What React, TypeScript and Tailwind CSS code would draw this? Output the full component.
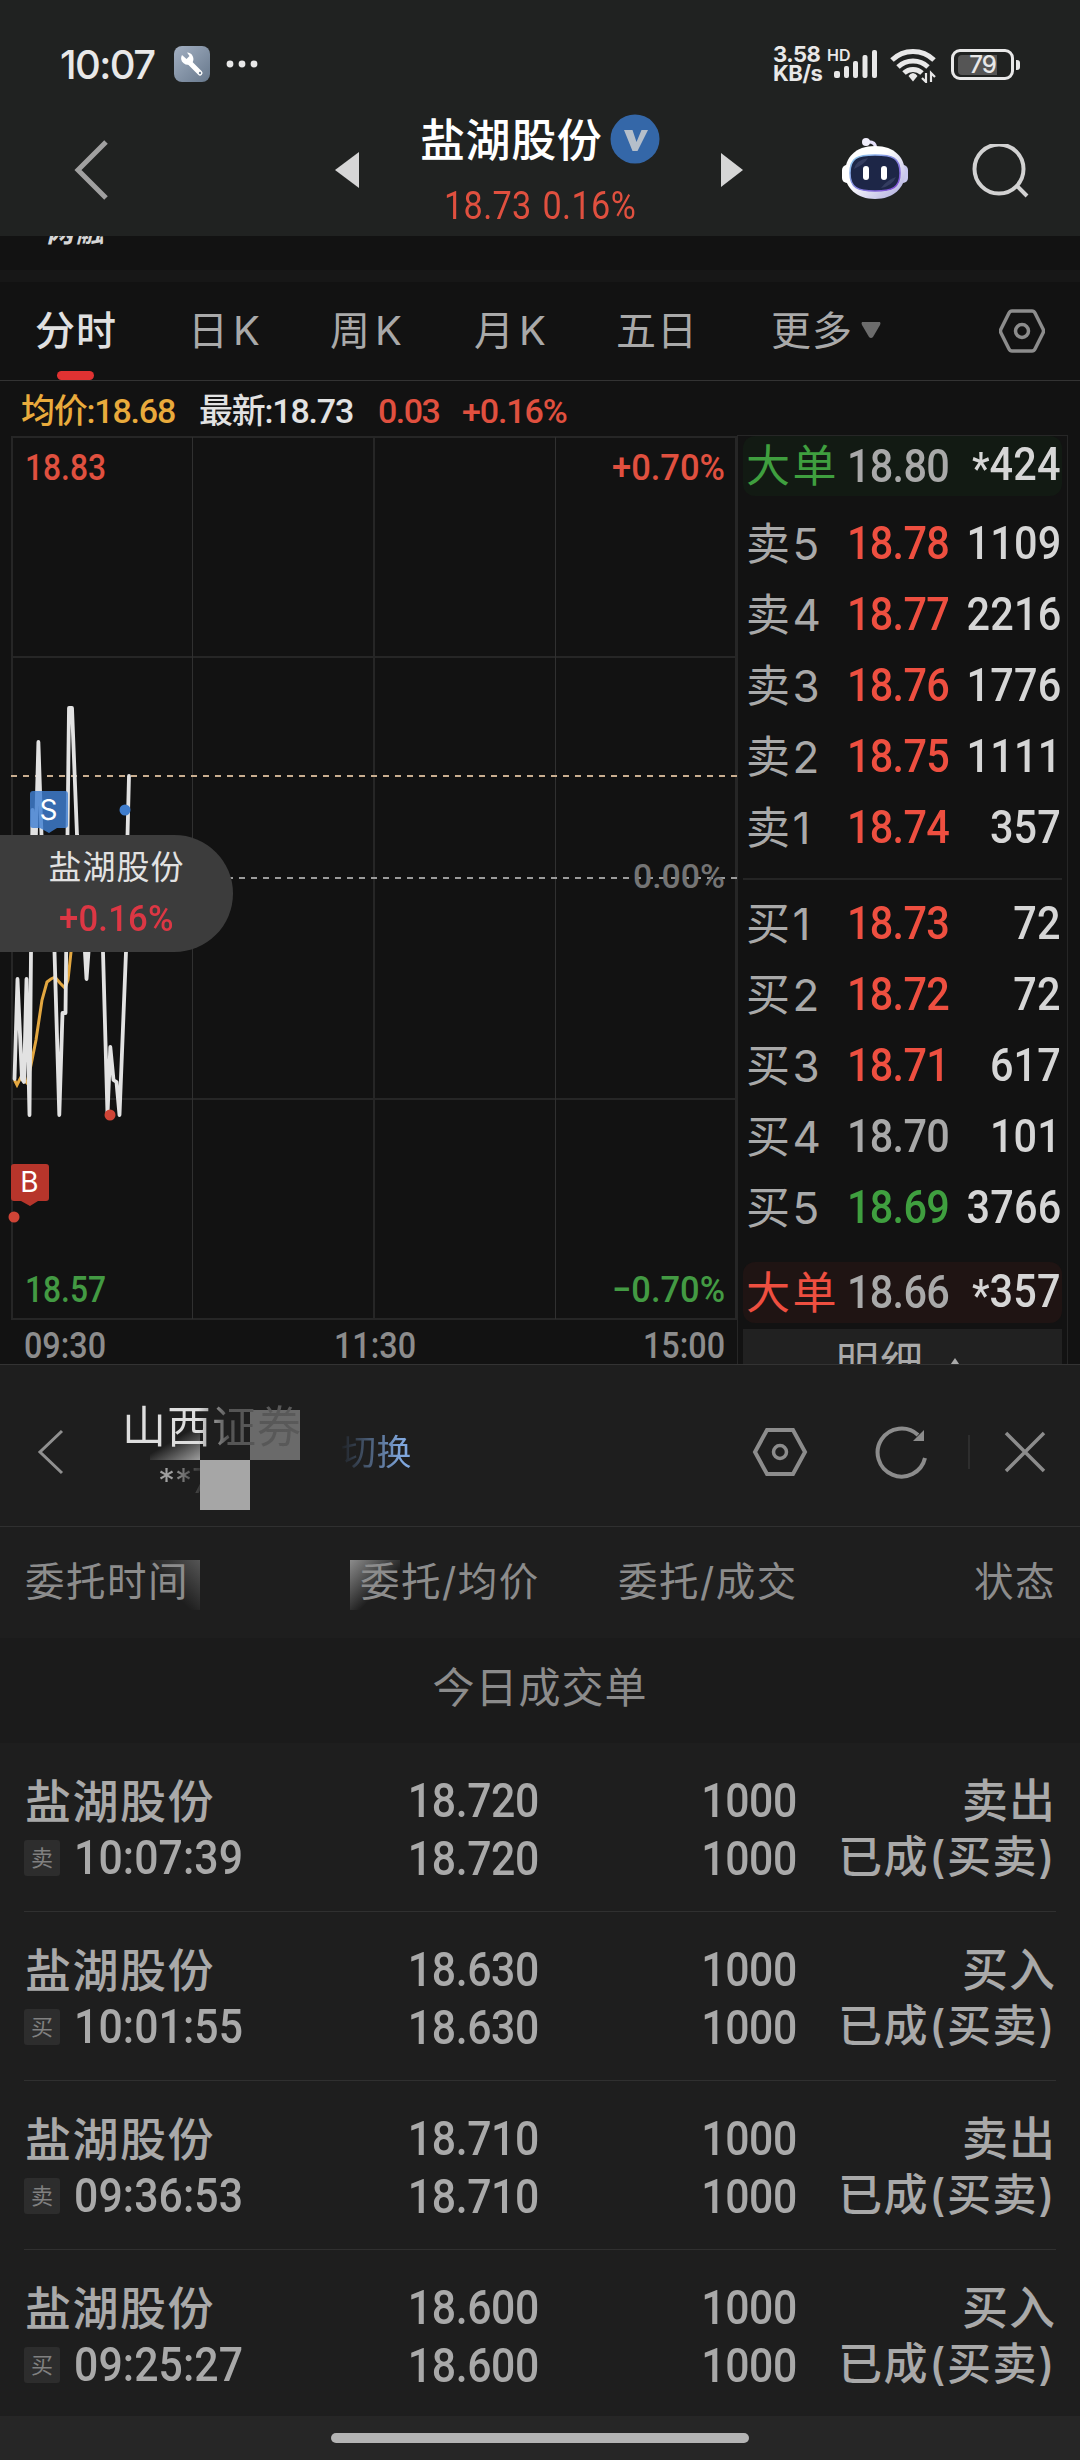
import React from 'react';
import clsx from 'clsx';

interface Quote {
  label: string;
  price: string;
  amount: string;
  big?: boolean;
  tone: string;
}

interface Order {
  side: string;
  action: string;
  time: string;
  price: string;
}

const RED = 'text-[#ee4f40]';
const GREEN = 'text-[#3f9f3f]';
const GRAY = 'text-[#a9a9a9]';

const sells: Quote[] = [
  { label: '卖5', price: '18.78', amount: '1109', tone: RED },
  { label: '卖4', price: '18.77', amount: '2216', tone: RED },
  { label: '卖3', price: '18.76', amount: '1776', tone: RED },
  { label: '卖2', price: '18.75', amount: '1111', tone: RED },
  { label: '卖1', price: '18.74', amount: '357', tone: RED },
];

const buys: Quote[] = [
  { label: '买1', price: '18.73', amount: '72', tone: RED },
  { label: '买2', price: '18.72', amount: '72', tone: RED },
  { label: '买3', price: '18.71', amount: '617', tone: RED },
  { label: '买4', price: '18.70', amount: '101', tone: GRAY },
  { label: '买5', price: '18.69', amount: '3766', tone: GREEN },
];

const orders: Order[] = [
  { side: '卖', action: '卖出', time: '10:07:39', price: '18.720' },
  { side: '买', action: '买入', time: '10:01:55', price: '18.630' },
  { side: '卖', action: '卖出', time: '09:36:53', price: '18.710' },
  { side: '买', action: '买入', time: '09:25:27', price: '18.600' },
];

const StatusBar: React.FC = () => (
  <div className="flex h-[120px] items-start pl-[60px] pr-[60px] pt-[44px] text-[#e8e8e8]">
    <span className="w-[98px] font-[Inter] text-[40px] font-medium leading-[42px] tracking-[-1.600px]">10:07</span>
    <svg width="36" height="36" viewBox="0 0 36 36" className="ml-[16px] mt-[2px]">
      <defs>
        <linearGradient id="tool" x1="0" y1="0" x2="1" y2="1">
          <stop offset="0" stopColor="#a3b0c2" />
          <stop offset="1" stopColor="#67788c" />
        </linearGradient>
      </defs>
      <rect width="36" height="36" rx="8" fill="url(#tool)" />
      <path d="M15 16L26 27" stroke="#fff" strokeWidth="5" strokeLinecap="round" />
      <path d="M8 9a6.500 6.500 0 0 0 10 8a6.500 6.500 0 0 0-5-10.500l2.500 3.500-3 3z" fill="#fff" />
      <circle cx="26" cy="27" r="1.200" fill="#6f8094" />
    </svg>
    <svg width="34" height="8" viewBox="0 0 34 8" className="ml-[16px] mt-[16px]" fill="#e8e8e8">
      <circle cx="4" cy="4" r="3.400" />
      <circle cx="16" cy="4" r="3.400" />
      <circle cx="28" cy="4" r="3.400" />
    </svg>
    <div className="ml-auto w-[56px] pt-[1px] font-[Inter] text-[22px] font-bold leading-[19px] tracking-[-0.500px]">
      <div>3.58</div>
      <div>KB/s</div>
    </div>
    <div className="w-[50px]">
      <div className="ml-[-2px] h-[5px] pt-[4px] font-[Inter] text-[16px] font-semibold leading-[14px]">HD</div>
      <svg width="46" height="30" viewBox="0 0 46 30" className="ml-[3px]" fill="#e8e8e8">
        <rect x="2" y="22" width="6" height="7" rx="2" />
        <rect x="12" y="17" width="5" height="12" rx="2" />
        <rect x="21" y="12" width="5" height="17" rx="2" />
        <rect x="30.500" y="6" width="5" height="23" rx="2" />
        <rect x="40" y="1" width="5" height="28" rx="2" />
      </svg>
    </div>
    <svg width="50" height="38" viewBox="0 0 50 38" className="ml-[10px] mt-[1px]" fill="none" stroke="#e8e8e8">
      <path d="M3 15a30 30 0 0 1 42 0" strokeWidth="5" />
      <path d="M9 22a22 22 0 0 1 30 0" strokeWidth="5" />
      <path d="M15 28a13 13 0 0 1 18 0" strokeWidth="5" />
      <path d="M24 28a6 6 0 0 1 4.500 3L24 36.500 19.500 31A6 6 0 0 1 24 28z" fill="#e8e8e8" stroke="none" />
      <path d="M37 28v9l-4-4M42 37v-9l4 4" strokeWidth="2.200" />
    </svg>
    <div className="ml-[12px] mt-[5px] flex items-center">
      <div className="flex h-[31px] w-[63px] items-center rounded-[9px] border-[3px] border-[#e8e8e8] px-[4px]">
        <div className="flex h-[20px] w-[39px] items-center justify-center rounded-l-[4px] bg-[#555] pl-[10px] font-[Inter] text-[24px] font-medium tracking-[-1px]">
          79
        </div>
      </div>
      <div className="ml-[2px] h-[10px] w-[4px] rounded-r-[3px] bg-[#e8e8e8]" />
    </div>
  </div>
);

const Robot: React.FC = () => (
  <svg width="68" height="66" viewBox="0 0 68 66">
    <defs>
      <linearGradient id="shell" x1="0" y1="0" x2="1" y2="1">
        <stop offset="0.4" stopColor="#ffffff" />
        <stop offset="1" stopColor="#a9a7dc" />
      </linearGradient>
      <linearGradient id="rim" x1="0" y1="0" x2="1" y2="1">
        <stop offset="0" stopColor="#8fd0f0" />
        <stop offset="1" stopColor="#7b3fd0" />
      </linearGradient>
    </defs>
    <path d="M26 6q8-1 9 6" fill="none" stroke="#e4e0fa" strokeWidth="3" />
    <circle cx="25" cy="6" r="4" fill="#f1effc" />
    <rect x="1" y="29" width="12" height="18" rx="5" fill="#fff" />
    <rect x="55" y="29" width="12" height="18" rx="5" fill="#c9c8ee" />
    <path d="M34 10C54 10 64 22 64 37S52 63 34 63 4 52 4 37 14 10 34 10z" fill="url(#shell)" />
    <path d="M34 19c18 0 25 3 25 18s-8 18-25 18S9 52 9 37s7-18 25-18z" fill="#1d2647" stroke="url(#rim)" strokeWidth="1.500" />
    <path d="M13 33q2-9 14-11-3 6-14 11zM40 52q11-2 15-11-9 3-15 11z" fill="#343d60" />
    <rect x="22" y="30" width="6" height="14" rx="3" fill="#fff" />
    <rect x="40" y="30" width="6" height="14" rx="3" fill="#fff" />
  </svg>
);

const TitleBar: React.FC = () => (
  <div className="flex h-[116px] items-start">
    <svg width="34" height="62" viewBox="0 0 34 62" className="ml-[74px] mt-[19px]">
      <path d="M32 3L4 31l28 28" fill="none" stroke="#a0a0a0" strokeWidth="5" />
    </svg>
    <svg width="24" height="36" viewBox="0 0 24 36" className="ml-[227px] mt-[32px]">
      <path d="M24 0v36L0 18z" fill="#d6d6d6" />
    </svg>
    <div className="ml-[61px] flex w-[240px] flex-col">
      <div className="flex h-[48px] items-start">
        <span className="w-[193px] whitespace-nowrap text-[45px] font-medium leading-[42px] tracking-[0.600px] text-white">盐湖股份</span>
        <svg width="50" height="50" viewBox="0 0 50 50" className="mt-[-6px] shrink-0">
          <circle cx="25" cy="25" r="24.500" fill="#3467a8" />
          <path d="M14 16h8.500l4 12 5-12H38L27.500 37h-5z" fill="#b5bfca" />
        </svg>
      </div>
      <div className="ml-[24px] mt-[18px] flex w-[196px] origin-left scale-x-90 gap-[12px] whitespace-nowrap font-[Roboto] text-[38px] leading-[40px] tracking-[0.400px] text-[#e0503f]">
        <span>18.73</span>
        <span>0.16%</span>
      </div>
    </div>
    <svg width="22" height="34" viewBox="0 0 22 34" className="ml-[61px] mt-[33px]">
      <path d="M0 0v34l22-17z" fill="#d6d6d6" />
    </svg>
    <div className="ml-[98px] mt-[16px]">
      <Robot />
    </div>
    <svg width="58" height="58" viewBox="0 0 58 58" className="ml-[63px] mt-[24px]" fill="none" stroke="#d2d2d2" strokeWidth="4">
      <circle cx="27" cy="25" r="24.500" />
      <path d="M44 41l11 11" />
    </svg>
  </div>
);

const Tabs: React.FC = () => (
  <div className="flex h-[99px] items-start border-b border-[#333] pt-[19px] text-[40px] leading-[60px] tracking-[1px] text-[#a9a9a9]">
    <div className="ml-[35px] flex h-[79px] w-[153px] flex-col whitespace-nowrap font-medium text-[#e0e0e0]">
      分时
      <span className="ml-[22px] mt-[10px] h-[9px] w-[37px] shrink-0 rounded-full bg-[#e03232]" />
    </div>
    <div className="flex w-[142px] gap-[4px]">
      <span>日</span>
      <span>K</span>
    </div>
    <div className="flex w-[144px] gap-[4px]">
      <span>周</span>
      <span>K</span>
    </div>
    <div className="flex w-[142px] gap-[4px]">
      <span>月</span>
      <span>K</span>
    </div>
    <div className="w-[155px]">五日</div>
    <div className="w-[90px]">更多</div>
    <svg width="20" height="17" viewBox="0 0 20 17" className="mt-[21px]">
      <path d="M1 0h18q1 1 0 3l-7 12q-2 2-4 0L1 3Q0 1 1 0z" fill="#6c6c6c" />
    </svg>
    <svg width="46" height="44" viewBox="0 0 46 44" className="ml-[118px] mt-[8px]" fill="none" stroke="#8c8c8c" strokeWidth="3.500">
      <path d="M13 2h20q2 0 3 2l8 16q1 2 0 4l-8 16q-1 2-3 2H13q-2 0-3-2L2 24q-1-2 0-4l8-16q1-2 3-2z" />
      <circle cx="23" cy="22" r="6.500" />
    </svg>
  </div>
);

const PriceChart: React.FC = () => (
  <svg width="737" height="929" viewBox="0 435 737 929" className="block shrink-0">
    <g stroke="#262626" strokeWidth="2" fill="none">
      <path d="M12 437H736V1319H12zM374 437V1319M12 657H736M12 1099H736" />
      <path d="M192.500 437V1319M555.500 437V1319" stroke="#303030" strokeWidth="1" />
    </g>
    <path d="M11 776H737" stroke="#c9ae90" strokeWidth="2" strokeDasharray="6 6" />
    <path d="M11 878H737" stroke="#9b9b9b" strokeWidth="2" strokeDasharray="6 6" />
    <path
      d="M14.500 1080L17 1085 21 1077 27 1083 31 1065 36 1040 42 1000 47 982 51 979 55 977 60 983 65 988 68 980 71 952 75 900"
      fill="none"
      stroke="#e3a740"
      strokeWidth="3"
    />
    <path
      d="M14.500 1079L17.500 979 22 1079 24 1082 26.500 979 29.500 1115 31 952 32.500 810 35.500 850 38.400 742 42 850 54.500 952 59.300 1115 62.500 1013 65.500 1013 67.500 835 69 708 72 708 77 835 82 900 86.500 979 93 890 103 952 107.500 1115 110.300 1047 113.500 1080 116.500 1082 119.500 1115 126 952 127.500 835 129 776"
      fill="none"
      stroke="#e2e2e2"
      strokeWidth="3.800"
      strokeLinejoin="round"
      strokeLinecap="round"
    />
    <circle cx="125" cy="810" r="5.500" fill="#3f7ccb" />
    <circle cx="110" cy="1115" r="5.500" fill="#cf4436" />
    <circle cx="14" cy="1217" r="5.500" fill="#cf4436" />
    <path d="M33 791h32q3 0 3 3v31q0 3-3 3h-8l-8 5-9-5h-7q-3 0-3-3v-31q0-3 3-3z" fill="#3f7fd2" fillOpacity="0.82" />
    <path d="M14 1164h32q3 0 3 3v31q0 3-3 3h-8l-8 5-9-5h-7q-3 0-3-3v-31q0-3 3-3z" fill="#b7352b" />
    <g fontFamily="Inter" fontSize="28" fill="#fff" textAnchor="middle">
      <text x="48.500" y="820">S</text>
      <text x="29.500" y="1192">B</text>
    </g>
    <g fontFamily="Roboto" fontSize="36.500" fontWeight="500">
      <g fill="#e0503f">
        <text x="25" y="480" textLength="81" lengthAdjust="spacingAndGlyphs">18.83</text>
        <text x="612" y="480" textLength="113" lengthAdjust="spacingAndGlyphs">+0.70%</text>
      </g>
      <g fill="#439a43">
        <text x="25" y="1302" textLength="81" lengthAdjust="spacingAndGlyphs">18.57</text>
        <text x="612" y="1302" textLength="113" lengthAdjust="spacingAndGlyphs">−0.70%</text>
      </g>
      <g fill="#8c8c8c">
        <text x="633" y="888" fontSize="34" fill="#747474" textLength="92" lengthAdjust="spacingAndGlyphs">0.00%</text>
        <text x="24" y="1358" textLength="82" lengthAdjust="spacingAndGlyphs">09:30</text>
        <text x="334" y="1358" textLength="82" lengthAdjust="spacingAndGlyphs">11:30</text>
        <text x="643" y="1358" textLength="82" lengthAdjust="spacingAndGlyphs">15:00</text>
      </g>
    </g>
  </svg>
);

const QuoteRow: React.FC<{ quote: Quote; className?: string; labelTone?: string }> = ({ quote, className, labelTone = GRAY }) => (
  <div className={clsx('flex items-center whitespace-nowrap pl-[3px]', className)}>
    <span className={clsx('w-[101px] text-[44px] tracking-[2.500px]', labelTone)}>{quote.label}</span>
    <span className={clsx('w-[100px] origin-left scale-x-90 font-[Roboto] text-[46px] font-medium tracking-[-0.800px]', quote.tone)}>
      {quote.price}
    </span>
    <span className="ml-auto mr-[1px] flex origin-right scale-x-90 font-[Roboto] text-[46px] font-medium tracking-[0.200px] text-[#d6d6d6]">
      {quote.big && <span className="pt-[6px] text-[44px]">*</span>}
      {quote.amount}
    </span>
  </div>
);

const OrderBook: React.FC = () => (
  <div className="flex h-[929px] w-[331px] flex-col overflow-hidden border-x border-t border-[#262626] pl-[5px] pr-[5px]">
    <QuoteRow
      quote={{ label: '大单', price: '18.80', amount: '424', big: true, tone: GRAY }}
      labelTone={GREEN}
      className="h-[60px] shrink-0 rounded-[12px] bg-[#121a13]"
    />
    <div className="mt-[12px]">
      {sells.map((q) => (
        <QuoteRow key={q.label} quote={q} className="h-[71px]" />
      ))}
    </div>
    <div className="mt-[15px] h-[2px] shrink-0 bg-[#242424]" />
    <div className="mt-[8px]">
      {buys.map((q) => (
        <QuoteRow key={q.label} quote={q} className="h-[71px]" />
      ))}
    </div>
    <QuoteRow
      quote={{ label: '大单', price: '18.66', amount: '357', big: true, tone: GRAY }}
      labelTone={RED}
      className="mt-[19px] h-[61px] shrink-0 rounded-[12px] bg-[#1f1413]"
    />
    <div className="mt-[6px] flex h-[72px] shrink-0 items-start bg-[#212121] pl-[93px] text-[43px] leading-[66px] tracking-[1px] text-[#a9a9a9]">
      明细
      <svg width="14" height="14" viewBox="0 0 20 14" className="ml-[24px] mt-[27px]">
        <path d="M10 0l9 13H1z" fill="#a9a9a9" />
      </svg>
    </div>
  </div>
);

const FloatingQuote: React.FC = () => (
  <div className="absolute left-0 top-[835px] flex h-[117px] w-[233px] flex-col items-center rounded-r-full bg-[#3c3c3c] pt-[8px]">
    <span className="text-[33px] leading-[48px] tracking-[1px] text-[#e2e2e2]">盐湖股份</span>
    <span className="mt-[1px] scale-x-95 font-[Roboto] text-[36.500px] font-medium leading-[54px] tracking-[0.200px] text-[#dc3744]">+0.16%</span>
  </div>
);

const AccountBar: React.FC = () => (
  <div className="relative flex h-[161px] items-start">
    {/* privacy mosaic behind the account name */}
    <div className="absolute left-[150px] top-[65px] h-[30px] w-[50px] bg-gradient-to-tl from-[#bdbdbd]/80 to-transparent to-60%" />
    <div className="absolute left-[250px] top-[45px] h-[50px] w-[50px] bg-[#6a6a6a]" />
    <svg width="28" height="46" viewBox="0 0 28 46" className="ml-[37px] mt-[64px]">
      <path d="M25 2L3 23l22 21" fill="none" stroke="#909090" strokeWidth="3" />
    </svg>
    <div className="relative ml-[57px] mt-[32px] w-[220px] whitespace-nowrap">
      <div className="h-[60px] w-[182px] bg-gradient-to-r from-[#dedede] from-42% via-[#555] via-58% to-[#5a5a5a] bg-clip-text text-[44px] leading-[60px] tracking-[1px] text-transparent">
        山西证券
      </div>
      <div className="ml-[36px] mt-px h-[46px] w-[70px] bg-gradient-to-r from-[#a0a0a0] from-20% to-[#2a2a2a] to-65% bg-clip-text font-[Inter] text-[34px] leading-[46px] text-transparent">
        **7
      </div>
    </div>
    <div className="ml-[-1px] w-[75px] bg-gradient-to-r from-[#1f2226] to-[#7fa6dc] to-80% bg-clip-text pt-[62px] text-[35px] leading-[50px] tracking-[0.500px] text-transparent">
      切换
    </div>
    <svg width="56" height="52" viewBox="0 0 56 52" className="ml-[336px] mt-[61px]" fill="none" stroke="#8c8c8c">
      <path d="M15 4h26l12 22-12 22H15L3 26z" strokeWidth="4" />
      <circle cx="28" cy="26" r="6.500" strokeWidth="3.500" />
    </svg>
    <svg width="54" height="56" viewBox="0 0 54 56" className="ml-[67px] mt-[59px]">
      <path d="M43 11A24 24 0 1 0 50 34" fill="none" stroke="#8c8c8c" strokeWidth="4" />
      <path d="M49 6v11H38z" fill="#8c8c8c" />
    </svg>
    <div className="ml-[39px] mt-[70px] h-[34px] w-[2px] bg-[#2e2e2e]" />
    <svg width="42" height="42" viewBox="0 0 42 42" className="ml-[34px] mt-[66px]">
      <path d="M2 2l38 38M40 2L2 40" stroke="#8c8c8c" strokeWidth="3.500" />
    </svg>
    <div className="absolute left-[200px] top-[95px] h-[50px] w-[50px] bg-[#a6a6a6]" />
  </div>
);

const OrderHeader: React.FC = () => (
  <div className="relative flex h-[111px] items-center whitespace-nowrap text-[39.500px] tracking-[1.500px] text-[#8c8c8c]">
    <div className="absolute left-[150px] top-[33px] h-[50px] w-[50px] bg-gradient-to-bl from-[#555] to-transparent to-60%" />
    <div className="absolute left-[350px] top-[33px] h-[50px] w-[50px] bg-gradient-to-br from-[#8c8c8c] to-transparent to-60%" />
    <span className="relative ml-[25px] w-[335px]">委托时间</span>
    <span className="relative w-[258px]">委托/均价</span>
    <span className="w-[356px]">委托/成交</span>
    <span>状态</span>
  </div>
);

const OrderRow: React.FC<{ order: Order; last: boolean }> = ({ order, last }) => (
  <div
    className={clsx(
      'mx-[24px] flex shrink-0 whitespace-nowrap pt-[29px] text-[#a9a9a9]',
      last ? 'h-[166px]' : 'h-[169px] border-b border-[#303030]',
    )}
  >
    <div className="w-[300px]">
      <div className="pl-[1px] text-[46px] font-medium leading-[58px] tracking-[1.500px]">盐湖股份</div>
      <div className="flex h-[56px] items-center">
        <span className="flex h-[36px] w-[36px] items-center justify-center rounded-[3px] bg-[#2d2d2d] text-[22px] text-[#808080]">
          {order.side}
        </span>
        <span className="ml-[14px] mt-[2px] origin-left scale-x-90 font-[Roboto] text-[47.500px] font-medium tracking-[0.100px]">
          {order.time}
        </span>
      </div>
    </div>
    <div className="w-[215px] origin-right scale-x-90 text-right font-[Roboto] text-[47.500px] font-medium leading-[58px] tracking-[-0.400px]">
      <div>{order.price}</div>
      <div>{order.price}</div>
    </div>
    <div className="w-[258px] origin-right scale-x-90 text-right font-[Roboto] text-[47.500px] font-medium leading-[58px] tracking-[-0.400px]">
      <div>1000</div>
      <div>1000</div>
    </div>
    <div className="ml-auto text-right font-medium leading-[57px]">
      <div className="text-[46px] tracking-[1px]">{order.action}</div>
      <div className="text-[44px] tracking-[1.600px]">已成(买卖)</div>
    </div>
  </div>
);

const App: React.FC = () => {
  return (
    <div className="relative flex h-[2460px] w-[1080px] flex-col overflow-hidden bg-[#121212] font-['Inter','Noto_Sans_CJK_SC',sans-serif]">
      <div className="h-[236px] shrink-0 bg-[#202221]">
        <StatusBar />
        <TitleBar />
      </div>
      <div className="flex h-[34px] shrink-0 items-start overflow-hidden">
        <span className="ml-[46px] mt-[-19px] text-[28px] font-bold italic leading-[30px] tracking-[2px] text-[#d6d6d6]">两融</span>
      </div>
      <div className="h-[12px] shrink-0 bg-[#171717]" />
      <Tabs />
      <div className="flex h-[54px] shrink-0 items-center whitespace-nowrap pl-[21px] pt-[6px] font-['Roboto','Noto_Sans_CJK_SC'] text-[34px] font-medium">
        <span className="w-[178px] tracking-[-1.200px] text-[#e9ab3c]">均价:18.68</span>
        <span className="w-[179px] tracking-[-1.200px] text-[#e2e2e2]">最新:18.73</span>
        <span className="w-[84px] tracking-[-1.500px] text-[#e0503f]">0.03</span>
        <span className="tracking-[-1.100px] text-[#e0503f]">+0.16%</span>
      </div>
      <div className="flex h-[929px] shrink-0">
        <PriceChart />
        <OrderBook />
      </div>
      <div className="flex h-[1096px] shrink-0 flex-col border-t border-[#333] bg-[#1e1e1e]">
        <AccountBar />
        <div className="h-px shrink-0 bg-[#303030]" />
        <OrderHeader />
        <div className="flex h-[105px] shrink-0 items-center justify-center bg-[#1b1b1b] pb-[6px] text-[42px] tracking-[1px] text-[#8c8c8c]">
          今日成交单
        </div>
        {orders.map((order, index) => (
          <OrderRow key={order.time} order={order} last={index === orders.length - 1} />
        ))}
        <div className="flex flex-1 justify-center bg-[#262626] pt-[17px]">
          <div className="h-[10px] w-[418px] rounded-full bg-[#b4b4b4]" />
        </div>
      </div>
      <FloatingQuote />
    </div>
  );
};

export default App;
